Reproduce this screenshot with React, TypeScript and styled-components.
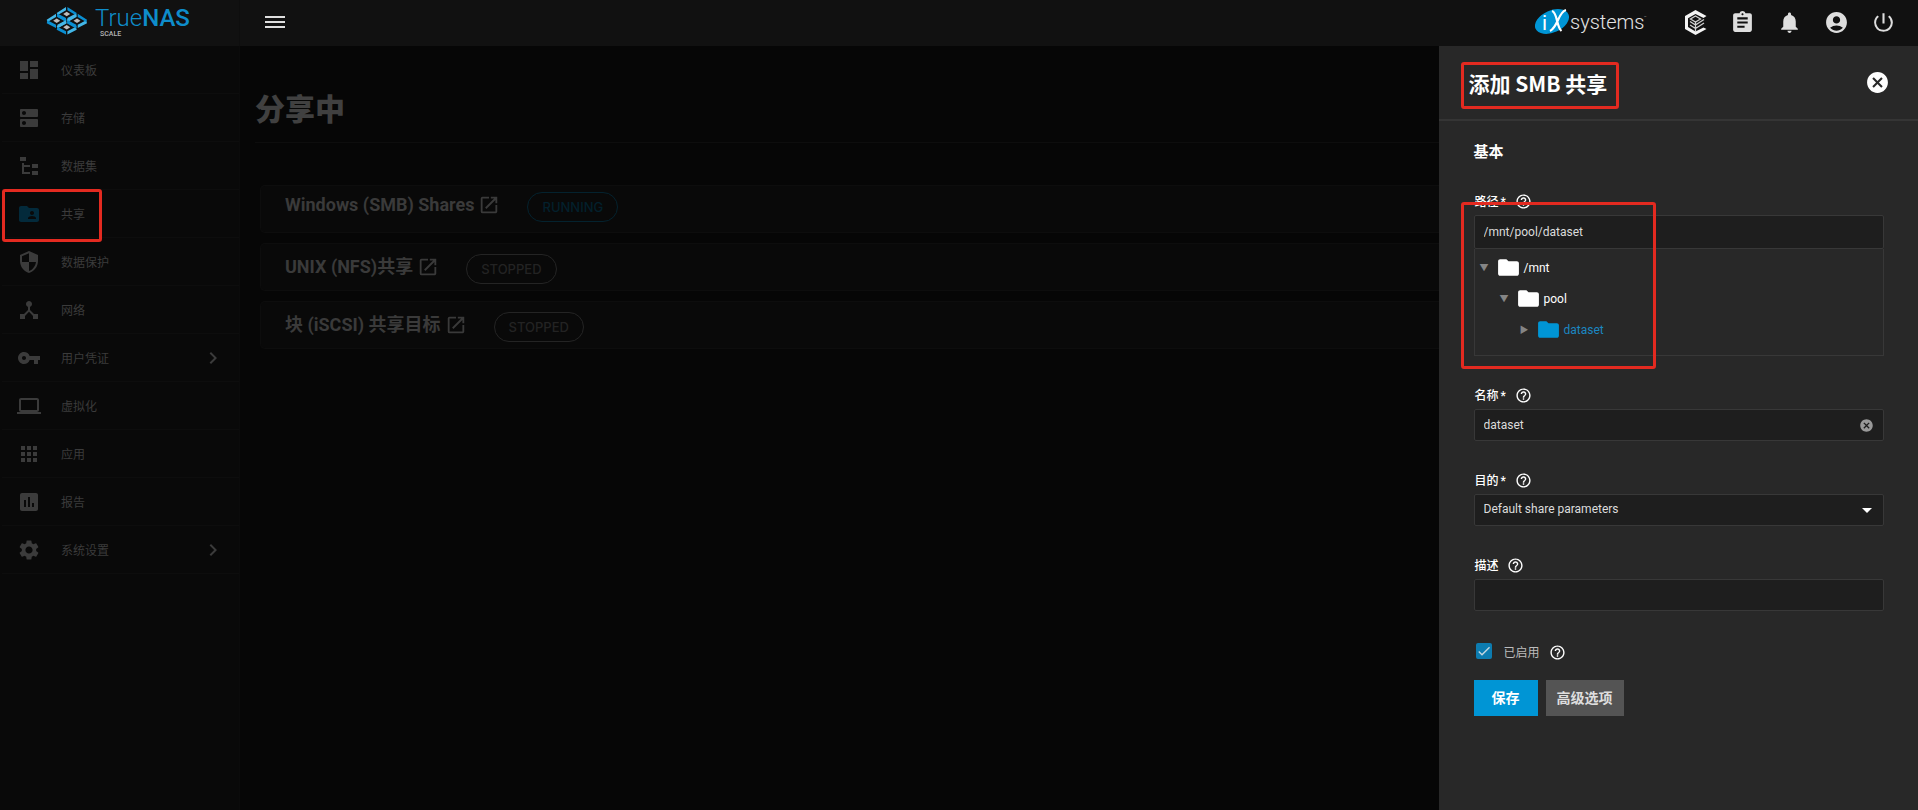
import React from 'react';
import styled, { createGlobalStyle } from 'styled-components';
import type { IconType } from 'react-icons';
import {
  MdAccountCircle, MdApps, MdAssessment, MdAssignment, MdCancel, MdCheck, MdChevronRight,
  MdDashboard, MdDeviceHub, MdDns, MdFolder, MdFolderShared, MdHelpOutline, MdLaptop,
  MdNotifications, MdOpenInNew, MdPowerSettingsNew, MdSecurity, MdSettings, MdVpnKey,
} from 'react-icons/md';

const GlobalStyle = createGlobalStyle`
  *, *::before, *::after { box-sizing: border-box; }
  body {
    margin: 0;
    background: #060606;
    color: #fff;
    font-family: Roboto, "Noto Sans CJK SC", sans-serif;
    font-size: 12px;
  }
  button, input, select { font: inherit; color: inherit; }
  button { cursor: pointer; border: 0; padding: 0; background: none; }
  h1, h2, h3, p, ul { margin: 0; padding: 0; }
  ul { list-style: none; }
`;

const Page = styled.div`
  min-height: 100vh;
  display: flex;
  flex-direction: column;
`;

const Header = styled.header`
  display: flex;
  align-items: center;
  height: 46px;
  padding-bottom: 2px;
  background: #111;
`;

const Brand = styled.a`
  display: flex;
  align-self: flex-start;
  width: 240px;
  height: 46px;
  padding: 6px 0 0 46px;
  text-decoration: none;
  border-right: 1px solid #0e0e0e;
`;

const Wordmark = styled.span`
  display: flex;
  flex-direction: column;
  padding-left: 7px;
  color: #0e8dcb;
  font-size: 24px;
  line-height: 24px;
  font-weight: 300;
  b { font-weight: 500; }
  small {
    padding: 1px 0 0 5px;
    font-size: 7px;
    line-height: 6px;
    font-weight: 500;
    color: #b5b5b5;
  }
`;

const MenuButton = styled.button`
  display: flex;
  margin: 0 auto 0 25px;
  color: #dedede;
`;

const Actions = styled.div`
  display: flex;
  align-items: center;
  gap: 22px;
  padding-right: 22px;
  color: #dedede;
`;

const IconButton = styled.button`
  display: flex;
  font-size: 25px;
`;

const VendorLink = styled.a`
  display: flex;
  margin-right: 12px;
`;

const Body = styled.div`
  flex: 1;
  display: flex;
`;

const Sidebar = styled.nav`
  flex: none;
  width: 240px;
  padding-left: 2px;
  background: #090909;
  border-right: 1px solid #0b0b0b;
`;

const NavItem = styled.li<{ $active?: boolean }>`
  position: relative;
  border-bottom: 1px solid #0d0d0d;
  color: #3b3b3b;
  svg:first-child { color: ${(p) => (p.$active ? '#032a3b' : '#3b3b3b')}; }
`;

const NavLink = styled.a`
  display: flex;
  align-items: center;
  height: 47px;
  padding: 0 14px 0 15px;
  color: inherit;
  text-decoration: none;
  svg { font-size: 24px; flex: none; }
  span { flex: 1; padding: 0 0 1px 20px; }
`;

const Marker = styled.i<{ $top: number; $right: number; $bottom: number; $left: number }>`
  position: absolute;
  z-index: 2;
  top: ${(p) => p.$top}px;
  right: ${(p) => p.$right}px;
  bottom: ${(p) => p.$bottom}px;
  left: ${(p) => p.$left}px;
  border: 3px solid #e32a20;
  border-radius: 3px;
  pointer-events: none;
`;

const Main = styled.main`
  min-width: 0;
  padding-left: 15px;
`;

const Content = styled.div`
  flex: 1;
  display: grid;
  grid-template-columns: minmax(0, 1fr) 25vw;
`;

const PageTitle = styled.h1`
  height: 97px;
  padding-top: 42px;
  border-bottom: 1px solid #0d0d0d;
  color: #404040;
  font-size: 30px;
  line-height: 44px;
  font-weight: 900;
`;

const Cards = styled.div`
  display: flex;
  flex-direction: column;
  gap: 10px;
  padding: 42px 0 0 5px;
`;

const Card = styled.section<{ $raised?: boolean }>`
  display: flex;
  align-items: center;
  gap: 27px;
  height: 48px;
  padding: ${(p) => (p.$raised ? '0 0 4px 24px' : '4px 0 0 24px')};
  border: 1px solid #0d0d0d;
  border-right: 0;
  border-radius: 5px 0 0 5px;
  background: #090909;
`;

const CardTitle = styled.h2`
  font-size: 18px;
  line-height: 26px;
  font-weight: 700;
  a {
    display: flex;
    align-items: center;
    gap: 4px;
    padding-bottom: 4px;
    color: #3a3a3a;
    text-decoration: none;
  }
  svg { font-size: 22px; }
`;

const Status = styled.span<{ $on?: boolean }>`
  height: 30px;
  padding: 0 14px;
  border: 1px solid ${(p) => (p.$on ? '#04222e' : '#242424')};
  border-radius: 15px;
  color: ${(p) => (p.$on ? '#03202c' : '#232323')};
  font-family: Inter, sans-serif;
  font-size: 13px;
  line-height: 28px;
  font-weight: 500;
`;

const Panel = styled.aside`
  background: #282828;
`;

const PanelHeader = styled.div`
  display: flex;
  align-items: center;
  justify-content: space-between;
  height: 75px;
  padding: 0 28px 0 30px;
  border-bottom: 2px solid #353535;
`;

const PanelTitle = styled.h2`
  position: relative;
  font-family: "Noto Sans CJK SC", sans-serif;
  font-size: 21px;
  line-height: 30px;
  font-weight: 700;
`;

const Form = styled.form`
  display: flex;
  flex-direction: column;
  padding: 21px 34px 0 35px;
`;

const Legend = styled.h3`
  margin-bottom: 28px;
  font-size: 15px;
  line-height: 20px;
  font-weight: 700;
`;

const Field = styled.div`
  position: relative;
  margin-bottom: 28px;
`;

const LabelRow = styled.div`
  display: flex;
  align-items: center;
  gap: 8px;
  height: 25px;
  padding: 0 0 5px 1px;
  font-weight: 500;
`;

const Required = styled.span`
  padding: 0 1px 0 2px;
`;

const Help = styled.button`
  display: flex;
  padding-top: 3px;
  font-size: 17px;
  color: #fff;
`;

const Control = styled.div<{ $tall?: boolean }>`
  display: flex;
  align-items: center;
  height: ${(p) => (p.$tall ? 34 : 32)}px;
  border: 1px solid #383838;
  border-radius: 2px;
  background: #1e1e1e;
  color: #dcdcdc;
`;

const TextInput = styled.input`
  flex: 1;
  min-width: 0;
  height: 100%;
  padding: 0 9px;
  border: 0;
  outline: 0;
  background: none;
`;

const Select = styled.select`
  flex: 1;
  height: 100%;
  padding: 0 9px 2px;
  border: 0;
  outline: 0;
  appearance: none;
  background: none;
`;

const Caret = styled.svg`
  margin-right: 11px;
  pointer-events: none;
`;

const ClearButton = styled.button`
  display: flex;
  margin-right: 9px;
  color: #999;
  font-size: 15px;
`;

const Tree = styled.ul`
  height: 107px;
  padding-top: 3px;
  border: 1px solid #383838;
  border-top: 0;
`;

const TreeRow = styled.li<{ $level: number; $selected?: boolean }>`
  display: flex;
  align-items: center;
  height: 31px;
  padding-left: ${(p) => 5 + p.$level * 20}px;
  color: ${(p) => (p.$selected ? '#1b87c2' : '#fff')};
  svg { font-size: 25px; color: ${(p) => (p.$selected ? '#0095d5' : '#fff')}; }
  span { padding-left: 3px; }
`;

const Toggle = styled.button`
  width: 16px;
  height: 16px;
  display: flex;
  align-items: center;
  color: #858585;
  font-size: 9px;
`;

const CheckRow = styled.div`
  display: flex;
  align-items: center;
  gap: 9px;
  height: 24px;
  color: #bdbdbd;
  label { display: flex; align-items: center; gap: 12px; padding-left: 2px; }
`;

const CheckBox = styled.span`
  display: grid;
  width: 16px;
  height: 16px;
  input, svg { grid-area: 1 / 1; width: 16px; height: 16px; margin: 0; }
  input { appearance: none; border-radius: 2px; background: #0d7cb0; }
  svg { color: #c5d8e2; pointer-events: none; }
`;

const Buttons = styled.div`
  display: flex;
  gap: 8px;
  padding-top: 17px;
`;

const FormButton = styled.button<{ $primary?: boolean }>`
  height: 36px;
  padding: 0 ${(p) => (p.$primary ? 18 : 11)}px;
  background: ${(p) => (p.$primary ? '#0095d5' : '#545454')};
  color: ${(p) => (p.$primary ? '#fff' : '#dedede')};
  font-size: 14px;
  line-height: 34px;
  font-weight: 700;
`;

const DatasetIcon = () => (
  <svg width="1em" height="1em" viewBox="0 0 24 24" fill="currentColor">
    <path d="M3 3h6v4H3zM15 10h6v4h-6zM15 17h6v4h-6zM5 9h2v2h6v2H7v5h6v2H5z" />
  </svg>
);

const markCells = [[20.7, 8], [10.7, 14.7], [31, 14.7], [20.7, 21.3]];

const TrueNasMark = () => (
  <svg width="42" height="30" viewBox="0 0 42 30">
    {markCells.map(([x, y]) => (
      <g key={`${x}-${y}`} transform={`translate(${x} ${y})`}>
        <path d="M-.7-7v3.200l-8.500 5-.8-2.200zM.7 7.200V4l8.500-4.500.8 3z" fill="#43b7e8" />
        <path d="M.7-7v3.200l8.500 5 .8-2.200zM-.7 7.200V4l-8.500-4.500-.8 3z" fill="#0a8fd2" />
        <path d="M0-2.200L3.500 0 0 2.200-3.500 0z" fill="#bdbdbd" />
      </g>
    ))}
  </svg>
);

const VendorLogo = () => (
  <svg width="114" height="30" viewBox="0 0 114 30" fontFamily="Roboto, sans-serif">
    <ellipse cx="17" cy="14.500" rx="18" ry="11" transform="rotate(-24 17 14.500)" fill="#0095d5" />
    <text x="7" y="23" fontSize="21" fontWeight="400" fill="#fff">i</text>
    <path d="M17 4q3 1 5 9.500t4.500 10.500M31 3q-4 1-8 10t-8 11" fill="none" stroke="#fff" strokeWidth="2.200" />
    <text x="35" y="22" fontSize="20" fontWeight="300" fill="#e4e4e4">systems</text>
    <text x="109" y="12" fontSize="4" fill="#999">™</text>
  </svg>
);

const TrueCommandIcon = () => (
  <svg width="25" height="25" viewBox="0 0 25 25">
    <path d="M12.500 0L23.500 6l-3 2-8-4L5 8.300v8.700l7.500 4.500 8-4 3 1.500-11 6L2 19V6z" fill="#f4f4f4" />
    <path d="M12.500 6l5 3-5 3-5-3zM7 11.500l5.500 3.500 8.500-5.500M7 15l5.500 3.500 8.500-5.500M12.500 12v10" fill="none" stroke="#d0d0d0" strokeWidth="1.300" />
  </svg>
);

type NavEntry = { label: string; icon: IconType | React.FC; active?: boolean; nested?: boolean };

const navEntries: NavEntry[] = [
  { label: '仪表板', icon: MdDashboard },
  { label: '存储', icon: MdDns },
  { label: '数据集', icon: DatasetIcon },
  { label: '共享', icon: MdFolderShared, active: true },
  { label: '数据保护', icon: MdSecurity },
  { label: '网络', icon: MdDeviceHub },
  { label: '用户凭证', icon: MdVpnKey, nested: true },
  { label: '虚拟化', icon: MdLaptop },
  { label: '应用', icon: MdApps },
  { label: '报告', icon: MdAssessment },
  { label: '系统设置', icon: MdSettings, nested: true },
];

const services = [
  { name: 'Windows (SMB) Shares', running: true },
  { name: 'UNIX (NFS)共享', running: false },
  { name: '块 (iSCSI) 共享目标', running: false },
];

const folders = ['/mnt', 'pool', 'dataset'];

const HelpButton = () => (
  <Help type="button" aria-label="帮助"><MdHelpOutline /></Help>
);

type FieldLabelProps = { htmlFor: string; text: string; required?: boolean };

const FieldLabel = ({ htmlFor, text, required }: FieldLabelProps) => (
  <LabelRow>
    <label htmlFor={htmlFor}>{text}{required && <Required>*</Required>}</label>
    <HelpButton />
  </LabelRow>
);

export default function App() {
  return (
    <Page>
      <GlobalStyle />
      <Header>
        <Brand href="#" aria-label="TrueNAS SCALE">
          <TrueNasMark />
          <Wordmark>
            <span>True<b>NAS</b></span>
            <small>SCALE</small>
          </Wordmark>
        </Brand>
        <MenuButton aria-label="菜单">
          <svg width="20" height="12" viewBox="0 0 20 12" fill="currentColor">
            <path d="M0 0h20v2H0zM0 5h20v2H0zM0 10h20v2H0z" />
          </svg>
        </MenuButton>
        <Actions>
          <VendorLink href="#" aria-label="iXsystems"><VendorLogo /></VendorLink>
          <IconButton aria-label="TrueCommand"><TrueCommandIcon /></IconButton>
          <IconButton aria-label="任务"><MdAssignment /></IconButton>
          <IconButton aria-label="通知"><MdNotifications /></IconButton>
          <IconButton aria-label="账户"><MdAccountCircle /></IconButton>
          <IconButton aria-label="电源"><MdPowerSettingsNew /></IconButton>
        </Actions>
      </Header>
      <Body>
        <Sidebar>
          <ul>
            {navEntries.map(({ label, icon: Icon, active, nested }) => (
              <NavItem key={label} $active={active}>
                <NavLink href="#">
                  <Icon />
                  <span>{label}</span>
                  {nested && <MdChevronRight />}
                </NavLink>
                {active && <Marker $top={-1} $right={137} $bottom={-5} $left={0} />}
              </NavItem>
            ))}
          </ul>
        </Sidebar>
        <Content>
          <Main>
            <PageTitle>分享中</PageTitle>
            <Cards>
              {services.map(({ name, running }) => (
                <Card key={name} $raised={running}>
                  <CardTitle><a href="#">{name}<MdOpenInNew /></a></CardTitle>
                  <Status $on={running}>{running ? 'RUNNING' : 'STOPPED'}</Status>
                </Card>
              ))}
            </Cards>
          </Main>
          <Panel>
            <PanelHeader>
              <PanelTitle>
                添加 SMB 共享
                <Marker $top={-6} $right={-12} $bottom={-11} $left={-8} />
              </PanelTitle>
              <IconButton aria-label="关闭"><MdCancel /></IconButton>
            </PanelHeader>
            <Form onSubmit={(e) => e.preventDefault()}>
              <Legend>基本</Legend>
              <Field>
                <FieldLabel htmlFor="path" text="路径" required />
                <Control $tall><TextInput id="path" defaultValue="/mnt/pool/dataset" /></Control>
                <Tree>
                  {folders.map((folder, level) => (
                    <TreeRow key={folder} $level={level} $selected={level === 2}>
                      <Toggle type="button" aria-label={folder}>{level === 2 ? '▶' : '▼'}</Toggle>
                      <MdFolder />
                      <span>{folder}</span>
                    </TreeRow>
                  ))}
                </Tree>
                <Marker $top={12} $right={228} $bottom={-13} $left={-13} />
              </Field>
              <Field>
                <FieldLabel htmlFor="name" text="名称" required />
                <Control>
                  <TextInput id="name" defaultValue="dataset" />
                  <ClearButton type="button" aria-label="清除"><MdCancel /></ClearButton>
                </Control>
              </Field>
              <Field>
                <FieldLabel htmlFor="purpose" text="目的" required />
                <Control>
                  <Select id="purpose"><option>Default share parameters</option></Select>
                  <Caret width="10" height="5" viewBox="0 0 10 5"><path d="M0 0h10L5 5z" fill="#fff" /></Caret>
                </Control>
              </Field>
              <Field>
                <FieldLabel htmlFor="description" text="描述" />
                <Control><TextInput id="description" /></Control>
              </Field>
              <CheckRow>
                <label>
                  <CheckBox><input type="checkbox" defaultChecked /><MdCheck /></CheckBox>
                  已启用
                </label>
                <HelpButton />
              </CheckRow>
              <Buttons>
                <FormButton type="submit" $primary>保存</FormButton>
                <FormButton type="button">高级选项</FormButton>
              </Buttons>
            </Form>
          </Panel>
        </Content>
      </Body>
    </Page>
  );
}
